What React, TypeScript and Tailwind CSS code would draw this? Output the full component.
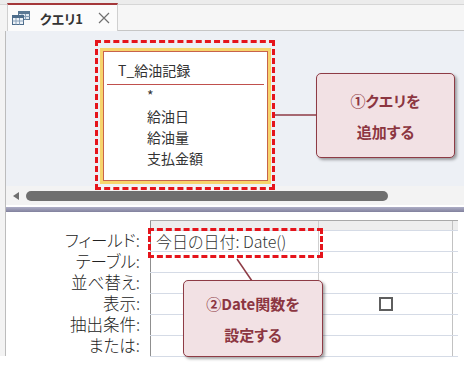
import React from 'react'

const labels = ['フィールド:', 'テーブル:', '並べ替え:', '表示:', '抽出条件:', 'または:']
const fields = ['*', '給油日', '給油量', '支払金額']

const QueryIcon = () => (
  <svg width="18" height="14" viewBox="0 0 18 14">
    {/* back sheet */}
    <rect x="6.5" y="0.5" width="11" height="8" fill="#dfe7f0" stroke="#5b7894" />
    <rect x="6.5" y="0.5" width="11" height="2.5" fill="#5b7894" />
    <path d="M10 3v5.5M13.5 3v5.5M6.5 5.5h11" stroke="#8aa2ba" strokeWidth="1" />
    {/* front sheet */}
    <rect x="0.5" y="4.5" width="11" height="9" fill="#eef3f8" stroke="#4d6c8b" />
    <rect x="0.5" y="4.5" width="11" height="2.5" fill="#4d6c8b" />
    <path d="M4 7v6.5M7.5 7v6.5M0.5 10h11" stroke="#8aa2ba" strokeWidth="1" />
  </svg>
)

const Callout = ({ lines, className }: { lines: string[]; className: string }) => (
  <div
    className={`absolute flex flex-col items-center justify-center rounded-[5px] border-[1.5px] border-[#8e3b45] bg-[#f2e1e4] shadow-[2px_2px_3px_rgba(0,0,0,0.35)] ${className}`}
  >
    {lines.map((line) => (
      <div key={line} className="text-[15px] font-bold leading-[31px] text-[#8c3641]">
        {line}
      </div>
    ))}
  </div>
)

export default function App() {
  return (
    <div className="relative h-[367px] w-[464px] overflow-hidden bg-white font-['Meiryo_UI','Noto_Sans_CJK_JP',sans-serif] text-[#333] [font-feature-settings:'palt']">
      {/* Tab bar */}
      <div className="flex h-[31px] items-end bg-[#ececec]">
        <div className="h-[27px] w-[7px] border-t border-[#d6d6d6] bg-[#f4f4f4]" />
        <div className="flex h-[28px] w-[111px] items-center border-x border-t-2 border-x-[#d0d0d0] border-t-[#a4373a] bg-[#fbfbfb]">
          <div className="ml-[4px]">
            <QueryIcon />
          </div>
          <span className="ml-[10px] text-[13px] font-bold leading-none text-[#333]">クエリ1</span>
          <svg className="ml-[15px]" width="12" height="12" viewBox="0 0 12 12">
            <path d="M1 1l10 10M11 1L1 11" stroke="#707070" strokeWidth="1.2" />
          </svg>
        </div>
        <div className="h-[27px] flex-1 border-y border-t-[#d6d6d6] border-b-[#c6c6c6] bg-[#f6f6f6]" />
      </div>

      <div className="flex h-[336px]">
        {/* left gutter */}
        <div className="h-[325px] w-[6px] border-r border-[#bcbcbc] bg-[#f3f3f3]" />

        <div className="flex flex-1 flex-col">
          {/* Design area */}
          <div className="h-[155px] overflow-hidden bg-[#edf0f5] pl-[94px] pt-[17px]">
            <div className="h-[136px] w-[171px] border-[3px] border-[#f7d46c]">
              <div className="h-full border border-[#c8634b] bg-white">
                <div className="h-[32px] pl-[14px] pt-[8px] text-[14px] leading-[21px]">T_給油記録</div>
                <div className="mx-[3px] h-px bg-[#c0504d]" />
                <div className="pl-[43px]">
                  {fields.map((f) => (
                    <div key={f} className="h-[21px] text-[14px] leading-[21px]">
                      {f}
                    </div>
                  ))}
                </div>
              </div>
            </div>
          </div>

          {/* Scroll bar */}
          <div className="flex h-[19px] items-center bg-[#f3f3f3] pl-[7px]">
            <svg width="6" height="8" viewBox="0 0 6 8">
              <path d="M6 0v8L0 4z" fill="#6f6f6f" />
            </svg>
            <div className="ml-[7px] h-[10px] w-[362px] rounded-full bg-[#6f6f6f]" />
          </div>
          <div className="h-[2px] bg-white" />
          <div className="h-[5px] bg-gradient-to-b from-[#aeaec6] to-[#81819d]" />

          {/* Query grid */}
          <div className="flex flex-1 pt-[8px]">
            <div className="w-[144px] pr-[10px] pt-[10px]">
              {labels.map((l) => (
                <div key={l} className="flex h-[21px] items-center justify-end text-[16.5px] font-light leading-[17px] text-[#222]">
                  {l}
                </div>
              ))}
            </div>
            <div className="h-[137px] w-[308px] border-b border-[#d5dbe6]">
              <div className="flex h-[10px] border-t border-[#a9a9a9] bg-[#eeeeee]">
                <div className="w-[168px] border-l border-[#8f8f8f]" />
                <div className="w-[134px] border-l border-[#cfcfcf]" />
                <div className="w-[6px] border-l border-[#c2c2c2]" />
              </div>
              {labels.map((l, i) => (
                <div key={l} className="flex h-[21px] border-t border-[#d5dbe6]">
                  <div className="w-[168px] border-l border-[#8f8f8f] pl-[5px] text-[16px] font-light leading-[20px] text-[#333]">
                    {i === 0 ? '今日の日付: Date()' : ''}
                  </div>
                  <div className="flex w-[134px] items-center justify-center border-l border-[#cfcfcf]">
                    {i === 3 && <div className="h-[14px] w-[14px] border-2 border-[#5e5e5e] bg-white" />}
                  </div>
                  <div className="w-[6px] border-l border-[#c2c2c2]" />
                </div>
              ))}
            </div>
          </div>
        </div>
      </div>

      {/* Annotations */}
      <div className="absolute left-[95px] top-[40px] h-[150px] w-[180px] border-[3px] border-dashed border-[#e5141b]" />
      <div className="absolute left-[148px] top-[228px] h-[30px] w-[175px] border-[3px] border-dashed border-[#e5141b]" />
      <svg className="pointer-events-none absolute left-0 top-0" width="464" height="367">
        <line x1="275" y1="115" x2="317" y2="115" stroke="#8e3b45" strokeWidth="1.5" />
        <line x1="252" y1="281" x2="237" y2="259" stroke="#8e3b45" strokeWidth="1.5" />
      </svg>
      <Callout lines={['①クエリを', '追加する']} className="left-[316px] top-[73px] h-[85px] w-[139px]" />
      <Callout lines={['②Date関数を', '設定する']} className="left-[183px] top-[280px] h-[77px] w-[140px]" />
    </div>
  )
}
